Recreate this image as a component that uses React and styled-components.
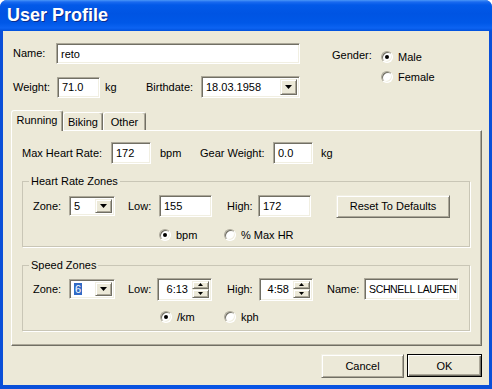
import React from "react";
import styled, { createGlobalStyle, css } from "styled-components";

const GlobalStyle = createGlobalStyle`
  html, body { margin: 0; padding: 0; background: #ffffff; }
  body { font-family: "Liberation Sans", Arial, sans-serif; font-size: 11px; color: #000; }
  * { box-sizing: border-box; }
`;

const raised = css`
  background: #ece9d8;
  border: 1px solid;
  border-color: #f1efe2 #716f64 #716f64 #f1efe2;
  box-shadow: inset 1px 1px 0 #ffffff, inset -1px -1px 0 #aca899;
`;

const sunken = css`
  background: #ffffff;
  border: 1px solid;
  border-color: #aca899 #ffffff #ffffff #aca899;
  box-shadow: inset 1px 1px 0 #716f64, inset -1px -1px 0 #f1efe2;
`;

const Window = styled.div`
  width: 492px;
  height: 389px;
  display: flex;
  flex-direction: column;
  background: linear-gradient(to right, #0a4fd8, #0855e6 50%, #0a4fd8);
  border-radius: 7px 7px 0 0;
  overflow: hidden;
`;

const TitleBar = styled.div`
  flex: none;
  height: 31px;
  display: flex;
  align-items: center;
  padding: 0 0 1px 7px;
  background: linear-gradient(
    to bottom,
    #4a97f7 0px,
    #1a6af0 2px,
    #0259e8 5px,
    #0054e3 14px,
    #0058e8 23px,
    #0c63f2 28px,
    #0050dc 31px
  );
  color: #ffffff;
  font: bold 18px "Liberation Sans", Arial, sans-serif;
  text-shadow: 1px 1px 0 #0b2d8e;
`;

const Body = styled.div`
  flex: 1;
  margin: 0 3px 4px 3px;
  background: #ece9d8;
  display: flex;
  flex-direction: column;
`;

const TopArea = styled.div`
  display: flex;
  align-items: flex-start;
  padding: 12px 0 0 10px;
`;

const Column = styled.div`
  display: flex;
  flex-direction: column;
  gap: ${(p) => p.$gap ?? 0}px;
`;

const Row = styled.div`
  display: flex;
  align-items: center;
  height: ${(p) => p.$h ?? 22}px;
  margin-left: ${(p) => p.$ml ?? 0}px;
  margin-top: ${(p) => p.$mt ?? 0}px;
`;

const Label = styled.span`
  flex: none;
  width: ${(p) => (p.$w ? `${p.$w}px` : "auto")};
  margin-left: ${(p) => p.$ml ?? 0}px;
  white-space: nowrap;
  line-height: 13px;
`;

const Field = styled.div`
  ${sunken}
  flex: none;
  width: ${(p) => p.$w}px;
  height: ${(p) => p.$h ?? 22}px;
  margin-left: ${(p) => p.$ml ?? 0}px;
  display: flex;
  align-items: center;
  padding: 0 3px 0 4px;
  white-space: nowrap;
  overflow: hidden;
  ${(p) =>
    p.$tight &&
    css`
      font-size: 10.5px;
      letter-spacing: -0.35px;
    `}
`;

const Combo = styled(Field)`
  padding: 2px 2px 2px 4px;
  justify-content: space-between;
`;

const DropBtn = styled.span`
  ${raised}
  flex: none;
  width: 17px;
  height: 100%;
  display: flex;
  align-items: center;
  justify-content: center;
`;

const Spin = styled(Field)`
  padding: 2px 2px 2px 4px;
`;

const SpinText = styled.span`
  flex: 1;
  text-align: right;
  padding-right: 4px;
`;

const SpinButtons = styled.span`
  flex: none;
  width: 17px;
  height: 100%;
  display: flex;
  flex-direction: column;
`;

const SpinBtn = styled.span`
  ${raised}
  flex: 1;
  display: flex;
  align-items: center;
  justify-content: center;
`;

const Selected = styled.span`
  background: #316ac5;
  color: #ffffff;
  line-height: 12px;
  padding: 0 1px;
`;

const GenderBlock = styled.div`
  display: flex;
  align-items: flex-start;
  margin: 6px 0 0 32px;
`;

const RadioItem = styled.label`
  flex: none;
  display: flex;
  align-items: center;
  gap: 5px;
  height: 16px;
  width: ${(p) => (p.$w ? `${p.$w}px` : "auto")};
  white-space: nowrap;
`;

const RadioCircle = styled.span`
  flex: none;
  width: 12px;
  height: 12px;
  border-radius: 50%;
  border: 1px solid;
  border-color: #aca899 #ffffff #ffffff #aca899;
  box-shadow: inset 1px 1px 0 #716f64, inset -1px -1px 0 #f1efe2;
  background: #ffffff;
  display: flex;
  align-items: center;
  justify-content: center;
  &::after {
    content: "";
    width: 4px;
    height: 4px;
    border-radius: 50%;
    background: #000000;
    display: ${(p) => (p.$checked ? "block" : "none")};
  }
`;

const TabSection = styled.div`
  margin: 12px 7px 0 8px;
  display: flex;
  flex-direction: column;
`;

const TabStrip = styled.div`
  display: flex;
  align-items: flex-end;
  height: 20px;
`;

const Tab = styled.div`
  flex: none;
  position: relative;
  z-index: ${(p) => (p.$active ? 1 : 0)};
  width: ${(p) => p.$w}px;
  height: ${(p) => (p.$active ? 21 : 18)}px;
  margin-bottom: ${(p) => (p.$active ? -1 : 0)}px;
  background: #ece9d8;
  border: 1px solid;
  border-bottom: none;
  border-color: #ffffff #716f64 transparent #ffffff;
  box-shadow: inset -1px 0 0 #aca899;
  border-radius: 3px 3px 0 0;
  display: flex;
  justify-content: center;
  padding-top: 3px;
  line-height: 13px;
`;

const Panel = styled.div`
  height: 216px;
  border: 1px solid;
  border-color: #ffffff #716f64 #716f64 #ffffff;
  box-shadow: inset -1px -1px 0 #aca899;
  padding: 11px 0 0 10px;
`;

const Group = styled.fieldset`
  width: 448px;
  min-width: 0;
  margin: ${(p) => p.$mt}px 0 0 0;
  padding: ${(p) => p.$pt}px 0 ${(p) => p.$pb}px 10px;
  border: 1px solid #c9c6b6;
  box-shadow: 1px 1px 0 #ffffff;
`;

const Legend = styled.legend`
  margin-left: -4px;
  padding: 0 2px;
  line-height: 13px;
`;

const Button = styled.button`
  ${raised}
  flex: none;
  width: ${(p) => p.$w}px;
  height: ${(p) => p.$h ?? 23}px;
  margin-left: ${(p) => p.$ml ?? 0}px;
  padding: 0;
  font: 11px "Liberation Sans", Arial, sans-serif;
  color: #000000;
  ${(p) =>
    p.$default &&
    css`
      border: 1px solid #000000;
      box-shadow: inset 1px 1px 0 #ffffff, inset -1px -1px 0 #716f64,
        inset -2px -2px 0 #aca899;
    `}
`;

const Footer = styled.div`
  display: flex;
  justify-content: flex-end;
  gap: 3px;
  padding: 8px 7px 0 0;
`;

const Arrow = ({ w = 7, h = 4, up = false }) => (
  <svg width={w} height={h} viewBox={`0 0 ${w} ${h}`}>
    <path
      d={up ? `M0 ${h}H${w}L${w / 2} 0Z` : `M0 0H${w}L${w / 2} ${h}Z`}
      fill="#000"
    />
  </svg>
);

const Radio = ({ checked, children, w }) => (
  <RadioItem $w={w}>
    <RadioCircle $checked={checked} />
    <span>{children}</span>
  </RadioItem>
);

const ComboBox = ({ w, h, children }) => (
  <Combo $w={w} $h={h}>
    <span>{children}</span>
    <DropBtn>
      <Arrow />
    </DropBtn>
  </Combo>
);

const Spinner = ({ w, value }) => (
  <Spin $w={w} $h={23}>
    <SpinText>{value}</SpinText>
    <SpinButtons>
      <SpinBtn>
        <Arrow w={5} h={3} up />
      </SpinBtn>
      <SpinBtn>
        <Arrow w={5} h={3} />
      </SpinBtn>
    </SpinButtons>
  </Spin>
);

export default function App() {
  return (
    <>
      <GlobalStyle />
      <Window>
        <TitleBar>User Profile</TitleBar>
        <Body>
          <TopArea>
            <Column $gap={12}>
              <Row $h={21}>
                <Label $w={43}>Name:</Label>
                <Field $w={244} $h={21}>reto</Field>
              </Row>
              <Row>
                <Label $w={44}>Weight:</Label>
                <Field $w={43} $h={21}>71.0</Field>
                <Label $w={41} $ml={5}>kg</Label>
                <Label $w={55}>Birthdate:</Label>
                <ComboBox w={99} h={22}>18.03.1958</ComboBox>
              </Row>
            </Column>
            <GenderBlock>
              <Label $w={49}>Gender:</Label>
              <Column $gap={4}>
                <Radio checked>Male</Radio>
                <Radio>Female</Radio>
              </Column>
            </GenderBlock>
          </TopArea>

          <TabSection>
            <TabStrip>
              <Tab $w={52} $active>Running</Tab>
              <Tab $w={40}>Biking</Tab>
              <Tab $w={43}>Other</Tab>
            </TabStrip>
            <Panel>
              <Row>
                <Label $w={89}>Max Heart Rate:</Label>
                <Field $w={40}>172</Field>
                <Label $w={40} $ml={9}>bpm</Label>
                <Label $w={73}>Gear Weight:</Label>
                <Field $w={40}>0.0</Field>
                <Label $ml={8}>kg</Label>
              </Row>

              <Group $mt={11} $pt={7} $pb={3}>
                <Legend>Heart Rate Zones</Legend>
                <Row>
                  <Label $w={36}>Zone:</Label>
                  <ComboBox w={46} h={20}>5</ComboBox>
                  <Label $w={31} $ml={13}>Low:</Label>
                  <Field $w={53}>155</Field>
                  <Label $w={31} $ml={15}>High:</Label>
                  <Field $w={53}>172</Field>
                  <Button $w={114} $ml={25}>Reset To Defaults</Button>
                </Row>
                <Row $h={16} $ml={126} $mt={10}>
                  <Radio checked w={65}>bpm</Radio>
                  <Radio>% Max HR</Radio>
                </Row>
              </Group>

              <Group $mt={12} $pt={6} $pb={5}>
                <Legend>Speed Zones</Legend>
                <Row>
                  <Label $w={36}>Zone:</Label>
                  <ComboBox w={46} h={20}>
                    <Selected>6</Selected>
                  </ComboBox>
                  <Label $w={29} $ml={13}>Low:</Label>
                  <Spinner w={55} value="6:13" />
                  <Label $w={32} $ml={15}>High:</Label>
                  <Spinner w={54} value="4:58" />
                  <Label $w={37} $ml={14}>Name:</Label>
                  <Field $w={95} $tight>SCHNELL LAUFEN</Field>
                </Row>
                <Row $h={16} $ml={127} $mt={9}>
                  <Radio checked w={64}>/km</Radio>
                  <Radio>kph</Radio>
                </Row>
              </Group>
            </Panel>
          </TabSection>

          <Footer>
            <Button $w={83} $h={24}>Cancel</Button>
            <Button $w={75} $h={23} $default>OK</Button>
          </Footer>
        </Body>
      </Window>
    </>
  );
}
